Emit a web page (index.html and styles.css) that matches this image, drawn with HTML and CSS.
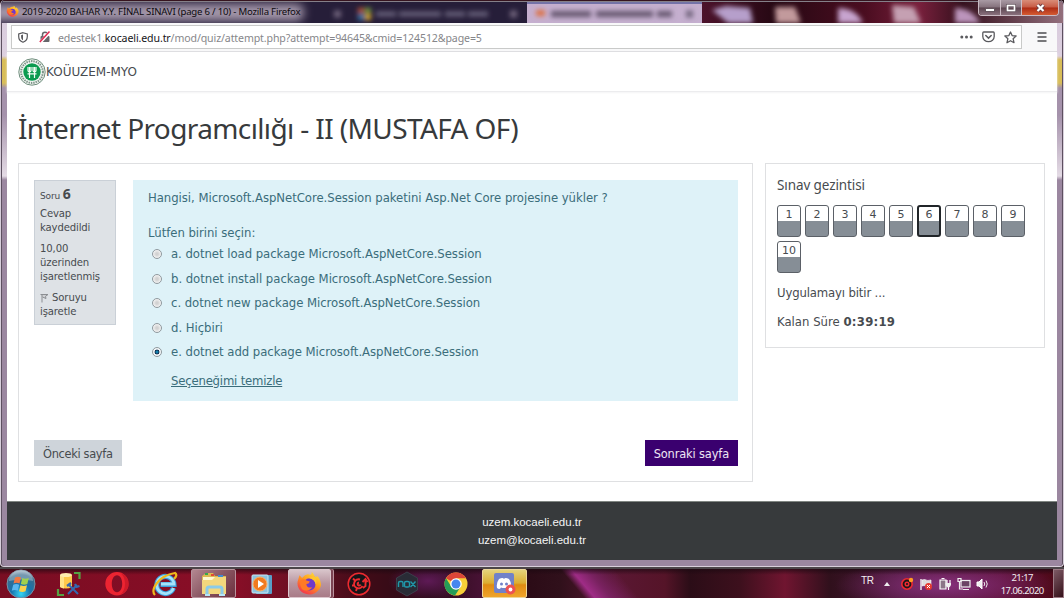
FILE: index.html
```
<!DOCTYPE html>
<html lang="tr">
<head>
<meta charset="utf-8">
<title>2019-2020 BAHAR Y.Y. FİNAL SINAVI</title>
<link rel="stylesheet" href="styles.css">
</head>
<body>
<div class="desktop">
  <div class="window">
    <header class="titlebar">
      <svg class="glass" viewBox="0 0 1064 23" aria-hidden="true">
        <defs>
          <filter id="soft" x="-10%" y="-50%" width="120%" height="200%"><feGaussianBlur stdDeviation="2.6"/></filter>
          <filter id="glow" x="-20%" y="-100%" width="140%" height="300%"><feGaussianBlur stdDeviation="5"/></filter>
          <linearGradient id="maroon"><stop offset="0" stop-color="#4c122b"/><stop offset=".2" stop-color="#260813"/><stop offset=".45" stop-color="#4a0d20"/><stop offset=".6" stop-color="#78203c"/><stop offset=".72" stop-color="#35101d"/><stop offset="1" stop-color="#94707d"/></linearGradient>
        </defs>
        <rect width="1064" height="23" fill="#261e39"/>
        <rect x="702" width="362" height="23" fill="url(#maroon)"/>
        <rect x="527" y="2" width="175" height="21" fill="#c5afcf"/>
        <rect x="527" y="2" width="175" height="2" fill="#7473a8"/>
        <rect x="-10" y="4" width="314" height="17" rx="8" fill="#a598ab" filter="url(#glow)"/>
        <g filter="url(#soft)">
          <path d="M358 8h6v5h-6z" fill="#c95635"/><path d="M365 8h6v5h-6z" fill="#7aa53c"/><path d="M358 14h6v6h-6z" fill="#387eb0"/><path d="M365 14h6v6h-6z" fill="#e4b42a"/>
          <path d="M376 14h112" stroke="#68607a" stroke-width="5" stroke-dasharray="20 3 42 4"/>
          <path d="M334 14h7M510 14h7M686 14h7" stroke="#71657d" stroke-width="7"/>
          <path d="M536 13h9" stroke="#df7040" stroke-width="6"/>
          <path d="M551 14h121" stroke="#65566e" stroke-width="6" stroke-dasharray="40 5 57 4"/>
          <path d="M712 10l14-4 24 2 3 15h-25z" fill="#b69fcb"/>
          <path d="M775 7h20l6 16h-25z" fill="#c29a9c"/>
          <path d="M838 8q18 0 25 15h-25z" fill="#c7a4cf"/>
          <path d="M892 5l22 2 7 16h-27z" fill="#c5a0b2"/>
          <path d="M955 8q17 0 25 15h-25z" fill="#bc94bc"/>
        </g>
        <path d="M0 .5h1064" stroke="#36141f"/><path d="M3 1.5h1058" stroke="#858089"/>
      </svg>
      <div class="caption">
        <svg width="13" height="13" viewBox="0 0 30 30"><use href="#firefox"/></svg>
        <span class="caption-text">2019-2020 BAHAR Y.Y. FİNAL SINAVI (page 6 / 10) - Mozilla Firefox</span>
      </div>
      <div class="controls">
        <span class="control"><svg width="22" height="14" viewBox="0 0 22 14"><rect x="6.5" y="7.5" width="9" height="3" fill="#fff" stroke="#65565f"/></svg></span>
        <span class="control control-max"><svg width="20" height="14" viewBox="0 0 20 14"><rect x="6.5" y="4.500" width="7" height="5" fill="none" stroke="#65565f" stroke-width="3"/><rect x="6.500" y="4.500" width="7" height="5" fill="none" stroke="#fff" stroke-width="1.600"/></svg></span>
        <span class="control control-close"><svg width="36" height="14" viewBox="0 0 36 14"><path d="M15.500 4l6 6m0-6l-6 6" stroke="#6e3d42" stroke-width="4"/><path d="M15.500 4l6 6m0-6l-6 6" stroke="#fff" stroke-width="2.200"/></svg></span>
      </div>
    </header>

    <div class="viewport">
      <nav class="toolbar">
        <div class="urlbar">
          <svg class="shield" width="10" height="11" viewBox="0 0 10 11"><path d="M5 .7L9.300 2v2.600C9.300 7.500 7.700 9.400 5 10.300 2.300 9.400.7 7.500.7 4.600V2z" fill="none" stroke="#58585c" stroke-width="1.200"/><path d="M5 2.600L3.100 3.200v1.500C3.100 6.600 3.800 7.500 5 8.200z" fill="#58585c"/></svg>
          <svg class="lock" width="12" height="12" viewBox="0 0 12 12"><path d="M3.500 5.500V3.700a2.500 2.500 0 0 1 5 0v1.800" fill="none" stroke="#66666a" stroke-width="1.500"/><rect x="1.500" y="5" width="9" height="6" rx="1" fill="#66666a"/><path d="M1.200 11.500L11 .8" stroke="#fff" stroke-width="3"/><path d="M.8 11L10.500.5" stroke="#e22850" stroke-width="1.500"/></svg>
          <span class="url">edestek1.<b>kocaeli.edu.tr</b>/mod/quiz/attempt.php?attempt=94645&amp;cmid=124512&amp;page=5</span>
          <span class="url-actions">
            <svg width="13" height="12" viewBox="0 0 13 12"><g fill="#5a5a5e"><circle cx="1.800" cy="6" r="1.500"/><circle cx="6.500" cy="6" r="1.500"/><circle cx="11.200" cy="6" r="1.500"/></g></svg>
            <svg width="13" height="12" viewBox="0 0 13 12"><path d="M1.700 1h9.600q.9 0 .9.900V5.500a5.700 5.200 0 0 1-11.400 0V1.900q0-.9.900-.9z" fill="none" stroke="#5a5a5e" stroke-width="1.300"/><path d="M3.800 4.500l2.700 2.600 2.700-2.600" fill="none" stroke="#5a5a5e" stroke-width="1.500" stroke-linecap="round"/></svg>
            <svg width="13" height="13" viewBox="0 0 13 13"><path d="M6.500 1l1.600 3.600 4 .4-3 2.700.9 4-3.500-2-3.500 2 .9-4-3-2.700 4-.4z" fill="none" stroke="#5a5a5e" stroke-width="1.300" stroke-linejoin="round"/></svg>
          </span>
        </div>
        <svg class="menu" width="10" height="10" viewBox="0 0 10 10"><path d="M.5 1h9M.5 5h9M.5 9h9" stroke="#4c4c50" stroke-width="1.300"/></svg>
      </nav>

      <div class="brand">
        <svg width="28" height="28" viewBox="0 0 28 28">
          <circle cx="14" cy="14" r="13.200" fill="#f4f7f4" stroke="#6e8d7c" stroke-width="1"/>
          <circle cx="14" cy="14" r="10.900" fill="none" stroke="#7d9488" stroke-width="2" stroke-dasharray="1.300 .8" pathLength="60"/>
          <circle cx="14" cy="14" r="8.700" fill="#0b9b50"/>
          <path d="M10 9v3.500q0 1.500 1.500 1.500t1.500-1.500V9M11.500 9v11M15 9v3.500q0 1.500 1.500 1.500t1.500-1.500V9M16.500 9v11M9.500 15.800h9" fill="none" stroke="#f4fff6" stroke-width="1.200"/>
        </svg>
        <span class="brand-name">KOÜUZEM-MYO</span>
      </div>

      <main class="page">
        <h1 class="title"><span>İnternet Programcılığı - II (MUSTAFA OF)</span></h1>
        <div class="columns">
          <section class="card quiz">
            <div class="question">
              <aside class="info">
                <p class="number">Soru <b>6</b></p>
                <p>Cevap<br>kaydedildi</p>
                <p>10,00<br>üzerinden<br>işaretlenmiş</p>
                <p><svg class="flag" width="9" height="10" viewBox="0 0 9 10"><path d="M2 1v8.500M.5 1.500h7.500L5.500 3.300 6 5.500 2.500 4" fill="#d0d2d5" stroke="#8b8e92" stroke-width="1"/></svg> Soruyu<br>işaretle</p>
              </aside>
              <div class="formulation">
                <p class="prompt">Hangisi, Microsoft.AspNetCore.Session paketini Asp.Net Core projesine yükler ?</p>
                <p class="choose">Lütfen birini seçin:</p>
                <div class="answers">
                  <label class="answer"><span class="radio"></span><span>a. dotnet load package Microsoft.AspNetCore.Session</span></label>
                  <label class="answer"><span class="radio"></span><span>b. dotnet install package Microsoft.AspNetCore.Session</span></label>
                  <label class="answer"><span class="radio"></span><span>c. dotnet new package Microsoft.AspNetCore.Session</span></label>
                  <label class="answer"><span class="radio"></span><span>d. Hiçbiri</span></label>
                  <label class="answer"><span class="radio radio-on"></span><span>e. dotnet add package Microsoft.AspNetCore.Session</span></label>
                </div>
                <a class="clear">Seçeneğimi temizle</a>
              </div>
            </div>
            <div class="actions">
              <a class="button">Önceki sayfa</a>
              <a class="button button-primary">Sonraki sayfa</a>
            </div>
          </section>
          <aside class="card navigation">
            <h2 class="nav-title">Sınav gezintisi</h2>
            <div class="numbers">
              <a class="num">1</a><a class="num">2</a><a class="num">3</a><a class="num">4</a><a class="num">5</a><a class="num num-current">6</a><a class="num">7</a><a class="num">8</a><a class="num">9</a><a class="num">10</a>
            </div>
            <p class="finish">Uygulamayı bitir ...</p>
            <p class="timer">Kalan Süre <b>0:39:19</b></p>
          </aside>
        </div>
      </main>

      <footer class="footer">
        <span>uzem.kocaeli.edu.tr</span>
        <span class="mail">uzem@kocaeli.edu.tr</span>
      </footer>
    </div>
  </div>

  <div class="taskbar">
    <div class="launchers">
      <span class="start"><svg width="30" height="30" viewBox="0 0 30 30">
        <defs><radialGradient id="orb" cx=".5" cy=".85" r=".85"><stop offset="0" stop-color="#35d6f5"/><stop offset=".4" stop-color="#1773ad"/><stop offset=".8" stop-color="#3c6c8c"/><stop offset="1" stop-color="#a8bccb"/></radialGradient></defs>
        <circle cx="15" cy="15" r="14" fill="url(#orb)" stroke="#7791a4"/>
        <path d="M3 12a12 11 0 0 1 24 0q-11-3-24 0z" fill="#fff" opacity=".3"/>
        <path d="M9 8.500q3-1.500 6 0l-1.500 6q-3-1.500-6 0z" fill="#f07842"/><path d="M16.300 9q3 1.500 6.500 0l-1.500 6q-3 1.500-6.500 0z" fill="#a1d04d"/>
        <path d="M7.200 15.800q3-1.500 6 0l-1.500 6q-3-1.500-6 0z" fill="#5bb7ee"/><path d="M14.500 16.200q3 1.500 6.500 0l-1.500 6q-3 1.500-6.500 0z" fill="#fad04c"/>
      </svg></span>
      <span class="launch"><svg width="26" height="26" viewBox="0 0 26 26">
        <path d="M18 2h5.500v6M2 18v6h6" fill="none" stroke="#55a243" stroke-width="2.200"/>
        <path d="M4 4v12q6 3 12 0V4z" fill="#ffc94b"/><path d="M4 4v12q2 1 4 1.500V4z" fill="#ffe38a"/><ellipse cx="10" cy="4" rx="6" ry="2" fill="#ffedaf"/>
        <path d="M12 23l9-9M13 14l9 9" stroke="#3469af" stroke-width="2"/><path d="M11 15l4-3M19 13l1.500 3 3-1" fill="none" stroke="#3469af" stroke-width="2.200"/>
      </svg></span>
      <span class="launch"><svg width="26" height="26" viewBox="0 0 26 26"><path fill-rule="evenodd" fill="#ed2431" d="M13 1a11.700 11.700 0 1 0 0 23.400A11.700 11.700 0 0 0 13 1zm0 3.200c3.200 0 5.200 4 5.200 8.500s-2 8.500-5.200 8.500-5.200-4-5.200-8.500 2-8.500 5.200-8.500z"/><path d="M16 2a11 11 0 0 1 0 21.500q5-3 5-10.700T16 2z" fill="#b71322" opacity=".55"/></svg></span>
      <span class="launch"><svg width="26" height="26" viewBox="0 0 26 26">
        <path d="M21.500 17A8.600 8.600 0 1 1 22 13.500H8.500" fill="none" stroke="#3a9fdc" stroke-width="5"/><path d="M21.500 17A8.600 8.600 0 1 1 22 13H9" fill="none" stroke="#a5e2fa" stroke-width="2.800"/>
        <path d="M3 24Q-1 20 5 12T23 2q3 2-1 6" fill="none" stroke="#efb91b" stroke-width="2.200"/>
      </svg></span>
      <span class="launch active"><svg width="26" height="26" viewBox="0 0 26 26">
        <path d="M1 5l4-3h7l2 3h11v18H1z" fill="#dcb952"/><path d="M2 6h22v16H2z" fill="#fff7cf"/><path d="M1 9h10l3-3h11v17H1z" fill="#f3d77d"/><path d="M4 3h3" stroke="#38a84c" stroke-width="2"/><path d="M10 4h3" stroke="#e44833" stroke-width="2"/><path d="M17 5h5" stroke="#3f8bd4" stroke-width="2"/>
        <path d="M6 24v-6q0-2 2-2h11q2 0 2 2v6" fill="none" stroke="#8acbe9" stroke-width="3"/><path d="M4 24h5M18 24h6" stroke="#b5e6f8" stroke-width="2"/>
      </svg></span>
      <span class="launch"><svg width="24" height="24" viewBox="0 0 24 24"><rect x="6" y="3" width="16" height="19" rx="1" fill="#589fc8"/><rect x="2" y="3" width="16" height="18" rx="1" fill="#8cc4e0" stroke="#c9e7f3"/><circle cx="10" cy="12" r="7" fill="#f17b20" stroke="#fbb26c"/><path d="M8 8l6 4-6 4z" fill="#fff"/></svg></span>
      <span class="launch active active-light"><svg width="26" height="26" viewBox="0 0 30 30">
        <defs><linearGradient id="flame" x1=".8" y1="0" x2=".2" y2="1"><stop offset="0" stop-color="#ffe63c"/><stop offset=".45" stop-color="#ff9a1f"/><stop offset="1" stop-color="#f22b52"/></linearGradient></defs>
        <g id="firefox"><path d="M15 4q4 1 3-3 3 3 4 6l3-1q5 6 3.500 12A13.700 12.700 0 1 1 2.500 10L4 5l3 3Q11 3 15 4z" fill="url(#flame)"/><circle cx="15.500" cy="15.500" r="7" fill="#7139c9"/><path d="M5 11q4-3 7 0l4 1q-1 3-4 3 0 5 7 4-6 6-12 2-3-4-2-10z" fill="#ff7a24"/><path d="M14 8q8 1 9 8 2-6-2-10" fill="#ffc52e"/></g>
      </svg></span>
      <span class="launch"><svg width="26" height="26" viewBox="0 0 26 26"><circle cx="13" cy="13" r="10.800" fill="#171518" stroke="#ed2b30" stroke-width="1.500"/><path d="M14 8.500a4.500 4.500 0 1 0 2.500 6.500M13 11.500a1.500 1.500 0 1 0 1.500 2M7 7.500l2.500 2.500M6 14.500h3M10 20l1-3M17 17l2.500-2V9M16.500 11l3-3 2 3" fill="none" stroke="#ed2b30" stroke-width="1.900"/></svg></span>
      <span class="launch"><svg width="26" height="26" viewBox="0 0 26 26"><path d="M13 1l10.500 6v12L13 25 2.500 19V7z" fill="#292c36" stroke="#3b3e4a"/><path d="M4.500 16v-4q0-1.500 1.500-1.500h1.500Q9 10.500 9 12v4M16.500 10.500l5 5.500m0-5.500l-5 5.500" fill="none" stroke="#2099ab" stroke-width="1.400"/><rect x="10.500" y="10.500" width="5" height="5.500" rx="1.600" fill="none" stroke="#2099ab" stroke-width="1.400"/></svg></span>
      <span class="launch"><svg width="26" height="26" viewBox="0 0 26 26"><circle cx="13" cy="13" r="11.500" fill="#f8cf38"/><path d="M13 13L3 7.200A11.500 11.500 0 0 1 23 7.200H13z" fill="#dc4638"/><path d="M3 7.200A11.500 11.500 0 0 0 12 24.400L17.500 16 8.500 16z" fill="#259d58"/><circle cx="13" cy="13" r="5.800" fill="#fff"/><circle cx="13" cy="13" r="4.500" fill="#4587ee"/></svg></span>
      <span class="launch active active-alert"><svg width="26" height="26" viewBox="0 0 26 26"><rect x="3" y="2" width="20" height="20" rx="2" fill="#7182c8"/><path d="M6 17q-1-5 2-9 4-2 5 0 1-2 5 0 3 4 2 9-3 2-4-.500-3 1-6 0-1 2.500-4 .5z" fill="#fff"/><circle cx="10.500" cy="13" r="1.500" fill="#7182c8"/><circle cx="15.500" cy="13" r="1.500" fill="#7182c8"/><circle cx="19.500" cy="18.500" r="5" fill="#ed5251"/><circle cx="19.500" cy="18.500" r="1.900" fill="#fff"/></svg></span>
    </div>
    <div class="tray">
      <span class="lang">TR</span>
      <svg class="tray-up" width="6" height="4" viewBox="0 0 6 4"><path d="M0 4l3-4 3 4z" fill="#eee"/></svg>
      <svg width="14" height="14" viewBox="0 0 14 14"><circle cx="7" cy="7" r="5.200" fill="#1d1518" stroke="#ef2a31" stroke-width="1.600"/><circle cx="7" cy="7" r="1.800" fill="none" stroke="#ef2a31" stroke-width="1.500"/><circle cx="11" cy="3" r="2.200" fill="#ff9c23"/></svg>
      <svg width="14" height="14" viewBox="0 0 14 14"><path d="M2 2v11" stroke="#f5f5f5" stroke-width="1.400"/><path d="M3 3q3-1 4 0t5 0v6q-3 1-5 0t-4 0z" fill="#ddd" stroke="#fff" stroke-width=".6"/><circle cx="9.500" cy="9.500" r="3.500" fill="#e43a31"/><path d="M8 8l3 3m0-3l-3 3" stroke="#fff"/></svg>
      <svg width="14" height="14" viewBox="0 0 14 14"><path d="M2 3h6v9H2zM3.500 1.500h3" fill="#8b7688" stroke="#fff" stroke-width="1.200"/><path d="M9 3v3m3-3v3M10.500 10v3" stroke="#fff" stroke-width="1.200"/><path d="M7.500 6H13v2q-1 2.500-2.700 2.500T7.500 8z" fill="#eee"/></svg>
      <svg width="14" height="14" viewBox="0 0 14 14"><rect x="4" y="3.500" width="9" height="6.500" fill="#6b4464" stroke="#eee" stroke-width="1.200"/><path d="M6 12.500h6M1 1.500h3v3H1zM2.500 5v7H6" fill="none" stroke="#eee" stroke-width="1.200"/></svg>
      <svg width="14" height="14" viewBox="0 0 14 14"><path d="M2 5h2l3-3v10L4 9H2z" fill="#eee" stroke="#fff"/><path d="M9 5q1.500 2 0 4M11 3.500q2.500 3.500 0 7" fill="none" stroke="#eee"/></svg>
      <span class="clock"><span class="time">21:17</span><span class="date">17.06.2020</span></span>
      <span class="show-desktop"></span>
    </div>
  </div>
</div>
</body>
</html>
```
FILE: styles.css
```
* { box-sizing: border-box; }
body { margin: 0; font-family: "DejaVu Sans", sans-serif; color: #474b4f; overflow: hidden; }
p, h1, h2 { margin: 0; font-weight: normal; }
svg { display: block; flex: none; }
span, a, p { white-space: nowrap; }

.desktop { width: 1064px; height: 598px; display: flex; flex-direction: column; background: #241017; }

/* Window frame */
.window {
  position: relative;
  height: 567px;
  display: flex;
  flex-direction: column;
  border: solid #d8cfdb;
  border-width: 0 1px 1px;
  border-radius: 5px 5px 4px 4px;
  background: linear-gradient(#d6c9da 0, #ddd0e0 56px, #d8bd58 60px, #d8bd58 83px, #a592ab 88px, #a592ab 115px, #e4dbe5 176px, #9b87a0 180px, #9b87a0);
  box-shadow: inset 1px 0 #5d5060, inset -1px 0 #5d5060;
  overflow: hidden;
}
.titlebar { position: relative; height: 23px; flex: none; display: flex; justify-content: space-between; align-items: flex-start; }
.glass { position: absolute; left: -1px; top: 0; width: 1064px; height: 23px; }
.caption { position: relative; display: flex; align-items: center; gap: 3px; padding: 5px 0 0 5px; }
.caption-text { font: 9.6px/13px "Noto Sans", sans-serif; color: #0c0a0e; letter-spacing: -.2px; }
.controls { position: relative; display: flex; height: 16px; margin-right: 4px; border: 1px solid #c9b9c2; border-top: 0; border-radius: 0 0 4px 4px; overflow: hidden; }
.control { width: 22px; background: linear-gradient(#a99aa4, #85727d 48%, #5b4550 52%, #8a717d); border-right: 1px solid #cbbcc5; }
.control svg { margin-top: 1px; }
.control-max { width: 21px; }
.control-close { width: 36px; border: 0; background: linear-gradient(#d98c78, #c75b45 48%, #ad2a14 52%, #d45b32); }

/* Browser content */
.viewport { flex: 1; margin: 0 6px 6px; display: flex; flex-direction: column; background: #fff; min-height: 0; }
.toolbar { height: 29px; flex: none; display: flex; align-items: center; padding-left: 4px; background: #f8f8f9; border-bottom: 1px solid #dcdcdf; }
.urlbar { width: 1011px; height: 24px; display: flex; align-items: center; background: #fff; border: 1px solid #c9cac9; }
.shield { margin-left: 6px; }
.lock { margin-left: 11px; }
.url { margin: 1px 0 0 7px; font: 10.6px/20px "Noto Sans", sans-serif; letter-spacing: -.12px; color: #86868a; }
.url b { font-weight: normal; color: #151518; }
.url-actions { margin-left: auto; display: flex; align-items: center; gap: 9px; margin-right: 4px; }
.menu { margin-left: 15px; }
.brand { height: 40px; flex: none; display: flex; align-items: center; padding-left: 11px; border-bottom: 1px solid #ececee; box-shadow: 0 1px 2px #f4f4f5; }
.brand-name { font-size: 12px; }

/* Quiz page */
.page { flex: 1; padding: 17px 12px 0 11px; }
.title { height: 54px; font: 28px/38px "Noto Sans", sans-serif; letter-spacing: -.62px; color: #373a3c; }
.columns { display: flex; gap: 12px; align-items: flex-start; }
.card { border: 1px solid #dfe0e2; }
.quiz { width: 735px; height: 319px; padding: 16px 14px 15px 15px; display: flex; flex-direction: column; justify-content: space-between; }
.question { display: flex; gap: 17px; align-items: flex-start; }
.info { width: 82px; height: 145px; padding: 6px 5px; background: #dee2e6; border: 1px solid #cad0d7; font-size: 10.1px; line-height: 14px; letter-spacing: -.14px; display: flex; flex-direction: column; gap: 7px; }
.number { font-size: 9px; height: 13px; }
.number b { font: bold 14px/13px "Noto Sans", sans-serif; }
.flag { display: inline-block; vertical-align: -2px; }
.formulation { width: 605px; height: 221px; padding: 9px 15px; background: #def2f8; color: #3a6d7b; font-size: 11.7px; line-height: 18px; letter-spacing: -.04px; }
.prompt { height: 35px; }
.answers { display: flex; flex-direction: column; gap: 6.5px; padding: 3px 0 0 4px; }
.answer { display: flex; align-items: center; gap: 9px; }
.radio { width: 10px; height: 10px; border-radius: 50%; border: 1px solid #90999e; background: radial-gradient(circle, #d2d2d2 20%, #f7f7f7 75%); }
.radio-on { background: radial-gradient(circle at 50% 50%, #1591c0 8%, #102b4c 38%, #f2f6f8 48%); }
.clear { display: inline-block; margin: 11px 0 0 23px; text-decoration: underline; letter-spacing: -.2px; }
.actions { display: flex; justify-content: space-between; }
.button { height: 26px; padding: 0 9px; font-size: 11.4px; line-height: 28px; letter-spacing: -.32px; background: #ced4da; }
.button-primary { background: #3a006f; color: #eee6f4; letter-spacing: -.14px; }

.navigation { width: 280px; height: 185px; padding: 12px 11px; font-size: 11.7px; line-height: 18px; }
.nav-title { font: 13.500px/18px "Noto Sans", sans-serif; letter-spacing: -.1px; }
.numbers { display: flex; flex-wrap: wrap; gap: 4px; margin-top: 11px; }
.num { width: 24px; height: 32px; border: 1px solid #5b6067; border-radius: 3px; background: linear-gradient(#fff 15px, #868e96 15px); font-size: 11px; line-height: 17px; text-align: center; }
.num-current { border: 2px solid #212529; line-height: 15px; background: linear-gradient(#fff 14px, #868e96 14px); }
.finish { margin-top: 10.500px; letter-spacing: -.15px; }
.timer { margin-top: 11.500px; }
.timer b { letter-spacing: .25px; }

.footer { height: 59px; flex: none; display: flex; flex-direction: column; align-items: center; padding-top: 11px; background: #373a3c; border-top: 1px solid #808682; color: #f4f4f4; font: 11.5px/18px "Liberation Sans", Arial, sans-serif; }

/* Taskbar */
.taskbar {
  height: 31px;
  display: flex;
  justify-content: space-between;
  border-top: 2px solid #4c4549;
  background:
    linear-gradient(#1a0810aa, transparent 20%),
    radial-gradient(ellipse 110px 26px at 945px 16px, #86307c, transparent),
    radial-gradient(ellipse 40px 20px at 428px 12px, #5e1a56, transparent),
    linear-gradient(50deg, transparent 374px, #9f2c86 382px, #7a2261 394px, transparent 416px) 98px 0 / 864px 31px no-repeat,
    linear-gradient(90deg, #790d22 0, #8a0e27 230px, #6a1023 300px, #3e0b17 370px, #2a0b17 430px, #4c1339 490px, #2b0b16 525px, #30101b 560px, #5a1733 615px, #551428 665px, #2b0d17 690px, #3d101d 740px, #701530 785px, #30101c 830px, #4c1838 900px, #5c1033 1000px, #4d0814 1064px);
}
.launchers { display: flex; align-items: center; }
.start { width: 46px; padding-left: 6px; }
.launch { width: 45px; height: 29px; margin-right: 3.400px; display: flex; align-items: center; justify-content: center; border: 1px solid transparent; border-radius: 2px; }
.active { border-color: #b7929c; background: linear-gradient(135deg, #b38791, #86525e 55%, #6d303f); }
.active-light { background: linear-gradient(#d8c4ca, #b895a0 50%, #a97b87); border-color: #dcc6cd; box-shadow: 2px 0 #7b4352, 3px 0 #bb929d; width: 43px; margin-right: 5.400px; }
.active-alert { background: linear-gradient(#e5d37b, #dcae32 48%, #df8b12 55%, #f0a42b); border-color: #edd69b; }
.tray { display: flex; align-items: center; gap: 4.800px; color: #f2edf1; }
.lang { font: 10px/14px "Liberation Sans", Arial, sans-serif; margin: -5px 6px 0 0; letter-spacing: -.4px; }
.tray-up { margin-right: 5px; }
.clock { display: flex; flex-direction: column; align-items: center; width: 50px; margin-left: 3px; font: 9.500px/13px "Noto Sans", sans-serif; letter-spacing: -.55px; }
.show-desktop { width: 11px; height: 29px; margin-left: 1px; border: 1px solid #9b7a84; background: linear-gradient(135deg, #7d5a65, #351019); }
```
